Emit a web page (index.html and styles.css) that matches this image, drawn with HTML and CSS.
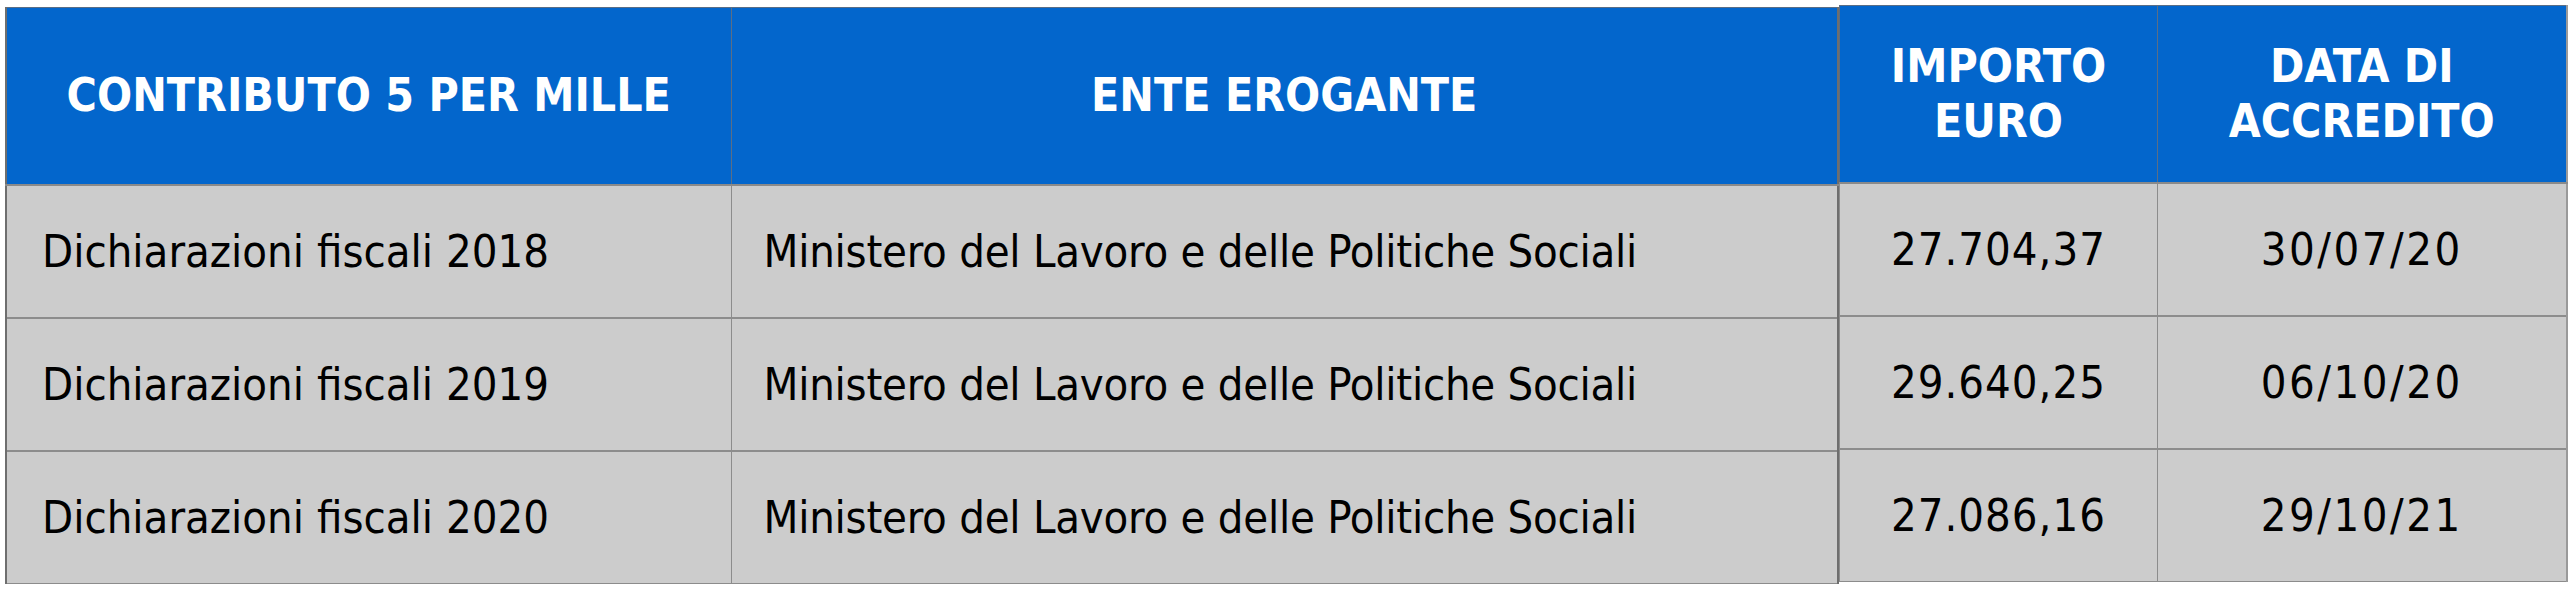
FILE: index.html
```html
<!DOCTYPE html>
<html lang="it">
<head>
<meta charset="utf-8">
<title>Contributo 5 per mille</title>
<link rel="stylesheet" href="styles.css">
</head>
<body>
<div class="wrap">
  <table class="tbl tbl-left">
    <colgroup><col class="c1"><col class="c2"></colgroup>
    <thead>
      <tr><th>CONTRIBUTO 5 PER MILLE</th><th>ENTE EROGANTE</th></tr>
    </thead>
    <tbody>
      <tr><td class="l1">Dichiarazioni fiscali 2018</td><td class="l2">Ministero del Lavoro e delle Politiche Sociali</td></tr>
      <tr><td class="l1">Dichiarazioni fiscali 2019</td><td class="l2">Ministero del Lavoro e delle Politiche Sociali</td></tr>
      <tr><td class="l1">Dichiarazioni fiscali 2020</td><td class="l2">Ministero del Lavoro e delle Politiche Sociali</td></tr>
    </tbody>
  </table>
  <table class="tbl tbl-right">
    <colgroup><col class="c3"><col class="c4"></colgroup>
    <thead>
      <tr><th>IMPORTO<br>EURO</th><th>DATA DI<br>ACCREDITO</th></tr>
    </thead>
    <tbody>
      <tr><td class="num">27.704,37</td><td class="date">30/07/20</td></tr>
      <tr><td class="num">29.640,25</td><td class="date">06/10/20</td></tr>
      <tr><td class="num">27.086,16</td><td class="date">29/10/21</td></tr>
    </tbody>
  </table>
</div>
</body>
</html>
```
FILE: styles.css
```css
html, body {
  margin: 0;
  padding: 0;
  background: #ffffff;
}
.wrap {
  display: flex;
  align-items: flex-start;
  padding: 5px 0 0 5px;
}
.tbl {
  border-collapse: collapse;
  table-layout: fixed;
  font-family: "Liberation Sans Narrow", "DejaVu Sans Condensed", "Liberation Sans", sans-serif;
}
.tbl-left {
  margin-top: 2px;
  width: 1832px;
}
.tbl-right {
  width: 727px;
}
.c1 { width: 725px; }
.c2 { width: 1107px; }
.c3 { width: 318px; }
.c4 { width: 409px; }
.tbl th {
  background: #0366cc;
  color: #ffffff;
  font-weight: 700;
  font-size: 46px;
  line-height: 55px;
  height: 177px;
  padding: 0;
  text-align: center;
  vertical-align: middle;
  border: 1px solid #5a6e86;
  border-bottom: 2px solid #8a8a8a;
  box-sizing: border-box;
}
.tbl td {
  background: #cccccc;
  color: #000000;
  font-size: 45px;
  height: 133px;
  padding: 0;
  text-align: center;
  vertical-align: middle;
  border: 1px solid #8c8c8c;
  border-top: 2px solid #8c8c8c;
  box-sizing: border-box;
}
.tbl td.l1 { text-align: left; padding-left: 35px; }
.tbl td.l2 { text-align: left; padding-left: 32px; letter-spacing: -0.25px; }
.tbl td.num { letter-spacing: 1px; }
.tbl td.date { letter-spacing: 2.5px; }
.tbl-left th:first-child, .tbl-left td:first-child { border-left: 2px solid #6e6e6e; }
.tbl-left th:last-child, .tbl-left td:last-child { border-right: 2px solid #6e6e6e; }
.tbl-right th:last-child, .tbl-right td:last-child { border-right: 2px solid #9a9a9a; }
```
